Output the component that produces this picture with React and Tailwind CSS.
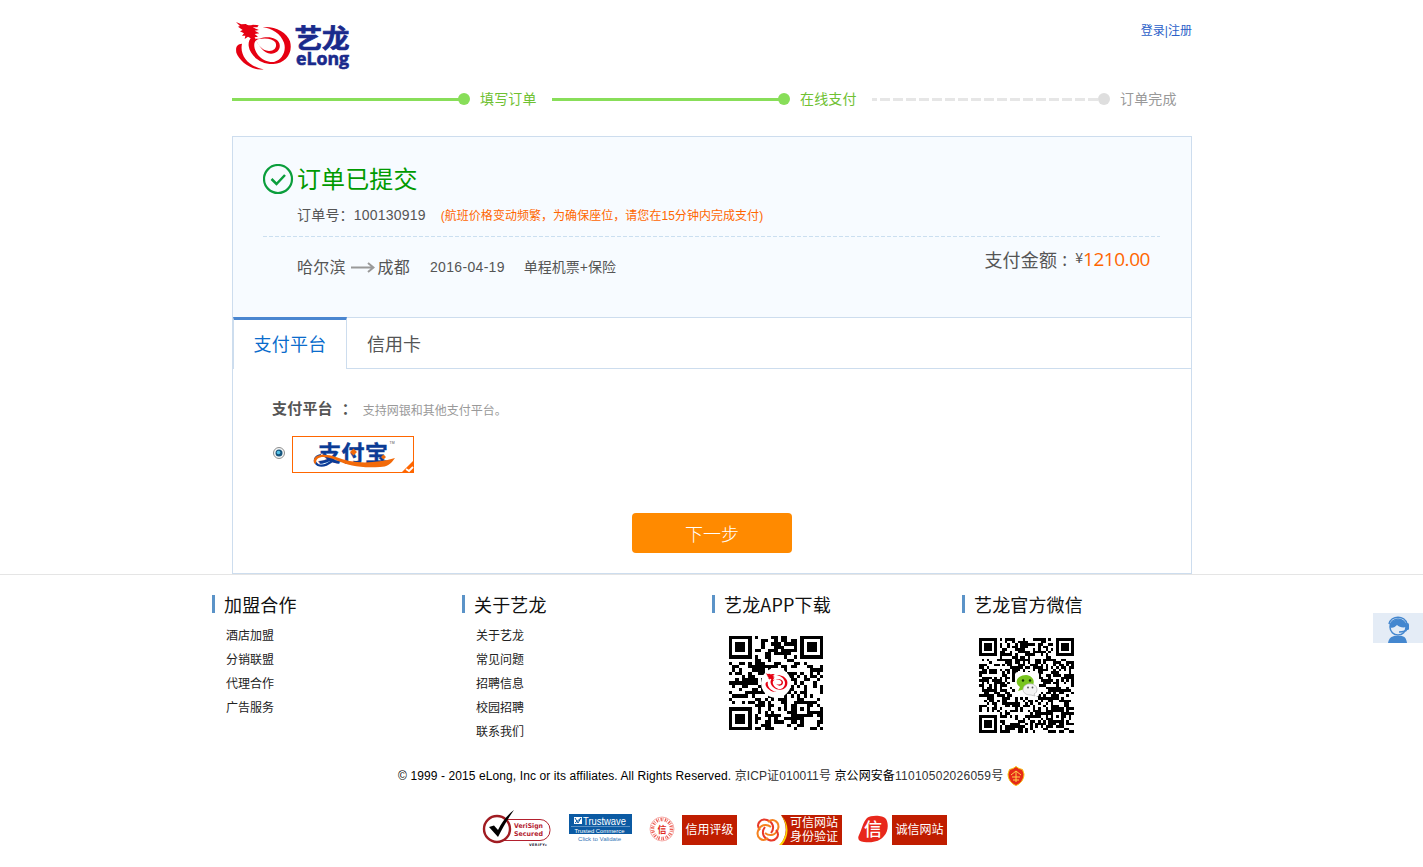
const CJK = "font-['Liberation_Sans','Noto_Sans_CJK_SC',sans-serif]";
const YH = "font-['Noto_Sans_CJK_SC',sans-serif]";
const cjkSvg = "'Noto Sans CJK SC',sans-serif";

function DragonMark() {
  return (
    <g fill="#e60012" transform="scale(.3333) translate(-42 -36)">
      <path d="M42 36L58 43L72 42C80 48 84 46 93 44L110 46L106 52L92 52L111 60L98 62L112 70L98 72L108 80L98 82C106 102 120 124 142 123C160 122 166 108 160 97C152 86 130 82 108 88C92 94 94 116 108 135C120 150 140 158 156 156C180 150 194 124 186 98C176 70 150 56 122 51C160 48 194 66 204 94C214 130 190 160 154 162C118 164 84 138 80 108C79 96 82 90 86 85L78 80L68 87L70 77L60 77L66 70L54 64L62 60L48 50L54 48ZM112 86C140 76 166 84 172 100C178 118 164 132 146 131C126 129 110 108 100 86Z" />
      <path d="M60 101C52 136 80 170 125 178C92 184 52 154 43 128C40 110 46 102 60 101Z" />
    </g>
  );
}

function Logo() {
  return (
    <svg width="118" height="70" viewBox="0 -11 118 70" className="ml-1 mt-[10px]" aria-label="eLong">
      <g transform="translate(0 1)"><DragonMark /></g>
      <g fill="#1a2a8c">
        <text x="58.500" y="26.500" fontSize="26" fontWeight="700" textLength="55" lengthAdjust="spacingAndGlyphs" fontFamily={cjkSvg} stroke="#1a2a8c" strokeWidth=".7">艺龙</text>
        <text x="60" y="43.500" fontSize="17.500" fontWeight="700" textLength="53" lengthAdjust="spacingAndGlyphs" fontFamily="'Open Sans',sans-serif" stroke="#1a2a8c" strokeWidth=".6">eLong</text>
      </g>
    </svg>
  );
}

function Step({ label, state, width }) {
  const done = state === "done";
  return (
    <li className={`flex items-center ${width}`}>
      <svg width="238" height="12" viewBox="0 0 238 12" className="shrink-0">
        <path d="M0 6.5H232" stroke={done ? "#88de59" : "#e6e6e6"} strokeWidth="3" strokeDasharray={done ? undefined : "10 3"} strokeDashoffset={done ? 0 : 5} />
        <circle cx="232" cy="6" r="6" fill={done ? "#88de59" : "#dedede"} />
      </svg>
      <span className={`mb-[3px] ml-[10px] text-sm leading-5 tracking-[0.15px] ${YH} ${done ? "text-[#6fc132]" : "text-[#999]"}`}>{label}</span>
    </li>
  );
}

function finder(r, c, n) {
  for (const [a, b] of [[0, 0], [0, n - 7], [n - 7, 0]]) {
    const y = r - a, x = c - b;
    if (y >= -1 && y <= 7 && x >= -1 && x <= 7) {
      if (y < 0 || y > 6 || x < 0 || x > 6) return false;
      return y === 0 || y === 6 || x === 0 || x === 6 || (y > 1 && y < 5 && x > 1 && x < 5);
    }
  }
  return null;
}

function qrPath(n, seed) {
  let s = seed, d = "";
  for (let r = 0; r < n; r++) {
    for (let c = 0; c < n; c++) {
      s = (Math.imul(s, 1103515245) + 12345) & 0x7fffffff;
      let on = ((s >> 16) & 1) === 1;
      const ay = Math.abs(r - (n - 7)), ax = Math.abs(c - (n - 7));
      if (ax < 3 && ay < 3) on = Math.max(ax, ay) !== 1;
      const f = finder(r, c, n);
      if (f !== null) on = f;
      if (on) d += `M${c} ${r}h1v1h-1z`;
    }
  }
  return d;
}

function QrCode({ modules, seed, size, children, className }) {
  return (
    <svg width={size} height={size} viewBox={`0 0 ${size} ${size}`} className={className}>
      <path d={qrPath(modules, seed)} transform={`scale(${size / modules})`} fill="#000" shapeRendering="crispEdges" />
      {children}
    </svg>
  );
}

function FooterColumn({ title, children }) {
  return (
    <section className="w-[250px]">
      <h3 className={`flex h-[18px] items-center border-l-[3px] border-[#5b93c8] pb-px pl-[9px] text-lg tracking-[0.15px] text-[#111] ${YH}`}>{title}</h3>
      {children}
    </section>
  );
}

function Links({ items }) {
  return (
    <ul className="ml-[14px] mt-[11px] text-xs leading-6 text-[#222]">
      {items.map((t) => <li key={t}><a href="#">{t}</a></li>)}
    </ul>
  );
}

function VeriSign() {
  return (
    <svg width="70" height="40" viewBox="0 0 70 40">
      <rect x="12" y="10.500" width="56" height="21" rx="10" fill="#fff" stroke="#b3202e" />
      <circle cx="15" cy="20" r="13" fill="#fff" stroke="#a01c22" strokeWidth="2.400" />
      <path d="M7 18L12 16.500L16 21C20 13 25 6 32 1C27 8 21 18 16 28Z" fill="#000" />
      <g fontFamily="'DejaVu Sans',sans-serif" fontWeight="700" fontSize="6.500" fill="#b3202e">
        <text x="32" y="19" textLength="29" lengthAdjust="spacingAndGlyphs">VeriSign</text>
        <text x="32" y="26.500" textLength="29" lengthAdjust="spacingAndGlyphs">Secured</text>
        <text x="47" y="36.500" fontSize="3.500" fill="#223" textLength="18">VERIFY▸</text>
      </g>
    </svg>
  );
}

function Trustwave() {
  return (
    <svg width="63" height="29" viewBox="0 0 63 29">
      <rect width="63" height="20" fill="#0b5aa3" />
      <path d="M5 3h8v7H5z" fill="#fff" />
      <path d="M6 4l3 5 3-5M6 9l6-5" stroke="#0b5aa3" fill="none" />
      <path d="M2 12.500H61" stroke="#7fa9d3" strokeWidth=".7" />
      <g fontFamily="'Liberation Sans',sans-serif" fill="#fff">
        <text x="14" y="10.500" fontSize="10" textLength="43" lengthAdjust="spacingAndGlyphs">Trustwave</text>
        <text x="5.500" y="18.500" fontSize="6" textLength="50" lengthAdjust="spacingAndGlyphs">Trusted Commerce</text>
        <text x="9" y="27" fontSize="6" textLength="43" lengthAdjust="spacingAndGlyphs" fill="#3576b5">Click to Validate</text>
      </g>
    </svg>
  );
}

function CreditSeal() {
  return (
    <svg width="26" height="26" viewBox="0 0 26 26">
      <circle cx="13" cy="13" r="12" fill="none" stroke="#f4a09a" strokeWidth=".8" />
      <circle cx="13" cy="13" r="9.500" fill="none" stroke="#e73428" strokeWidth="3.500" strokeDasharray="1.300 .8 .7 1.500" opacity=".8" />
      <circle cx="13" cy="13" r="6.500" fill="#fff" />
      <text x="8.500" y="16.500" fontSize="9" fontWeight="700" fill="#e02a20" fontFamily={cjkSvg}>信</text>
    </svg>
  );
}

function KnotSeal() {
  return (
    <svg width="32" height="30" viewBox="0 0 32 30">
      <path d="M25 0H32V30H24C32 20 31 9 25 0Z" fill="#c01d00" />
      <path d="M25 0C32 9 32 22 23 30L26 30C34 20 33 8 25 0Z" fill="#ffd400" />
      {[0, 90, 180, 270].map((a) => (
        <path key={a} transform={`rotate(${a} 12 15)`} d="M4 15C-1 9 5 3 11 5C17 7 19 13 15 18" fill="none" stroke={a % 180 ? "#f58220" : "#e83a2a"} strokeWidth="2" />
      ))}
    </svg>
  );
}

function HonestSeal() {
  return (
    <svg width="30" height="28" viewBox="0 0 30 28">
      <path d="M9 3C13 0 25 0 28 4C31 9 30 17 26 21C22 26 16 28 6 27C1 27-1 24 1 20C4 14 5 7 9 3Z" fill="#e8281c" />
      <text x="6" y="20.500" fontSize="18" fontWeight="500" fill="#fff" fontFamily={cjkSvg}>信</text>
    </svg>
  );
}

function SealLabel({ children, className }) {
  return <span className={`flex items-center justify-center bg-[#c01d00] pt-px text-xs text-white ${className}`}>{children}</span>;
}

export default function App() {
  return (
    <div className={`relative h-[867px] overflow-hidden bg-white text-[#555] ${CJK}`}>
      <div className="mx-auto w-[960px] relative left-[0.5px]">
        <header className="flex h-[86px] items-start justify-between">
          <Logo />
          <nav className="mt-[22px] flex text-xs leading-[18px] text-[#2a5fc9]"><a href="#">登录</a><span>|</span><a href="#">注册</a></nav>
        </header>
        <ol className="flex h-[50px] pt-[2px]">
          <div className="flex h-[22px]">
            <Step label="填写订单" state="done" width="w-[320px]" />
            <Step label="在线支付" state="done" width="w-[320px]" />
            <Step label="订单完成" state="todo" width="w-[320px]" />
          </div>
        </ol>

        <main className="h-[438px] border border-[#cdddee] bg-white">
          <section className="h-[180px] bg-[#f7fbff] px-[30px] pt-[27px]">
            <h1 className={`flex h-[31px] items-center text-2xl text-[#009a00] ${YH}`}>
              <svg width="31" height="31" viewBox="0 0 31 31" fill="none" stroke="#0b9e3c" className="mr-[3px] shrink-0">
                <circle cx="15" cy="15" r="14" strokeWidth="2.200" />
                <path d="M8.500 15L13.500 20L22 11" strokeWidth="2.500" />
              </svg>
              <span className="mb-[3px] tracking-[0.1px]">订单已提交</span>
            </h1>
            <p className="ml-[34px] mt-[10px] flex h-5 items-center text-sm tracking-[0.2px]">
              订单号：100130919<span className="relative top-px ml-[15px] text-xs tracking-[0.04px] text-[#ff6600]">(航班价格变动频繁，为确保座位，请您在15分钟内完成支付)</span>
            </p>
            <svg width="897" height="1" className="mt-[11px] block"><path d="M0 .5H897" stroke="#cbdff0" strokeDasharray="4 2" /></svg>
            <div className="ml-[34px] mr-[11px] flex justify-between">
              <p className="mt-[18px] flex h-6 items-center text-sm">
                <span className={`mb-[3px] text-base tracking-[0.2px] ${YH}`}>哈尔滨</span>
                <svg width="24" height="12" viewBox="0 0 24 12" className="ml-[5px] mr-[3px]" fill="none" stroke="#999" strokeWidth="2"><path d="M0 6.500H22M17 2L22.500 6.500L17 11" /></svg>
                <span className={`mb-[3px] text-base tracking-[0.2px] ${YH}`}>成都</span>
                <span className="ml-5 tracking-[0.32px]">2016-04-19</span>
                <span className="ml-[19px]">单程机票+保险</span>
              </p>
              <p className={`mt-2 flex h-7 items-center text-lg ${YH}`}>
                <span className="mb-px tracking-[0.2px]">支付金额</span><span className="w-[18px] pl-[5px] font-['Noto_Sans',sans-serif]">:</span><span className="relative -top-[2px] text-sm">¥</span>
                <span className="relative top-px font-['Open_Sans','Noto_Sans_CJK_SC',sans-serif] text-[19px] tracking-[-0.45px] text-[#ff6600]">1210.00</span>
              </p>
            </div>
          </section>
          <div className={`flex h-[52px] text-lg ${YH}`}>
            <button className="w-[114px] border-l border-r border-t-[3px] border-x-[#cdddee] border-t-[#4a86d0] pb-1 tracking-[0.2px] text-[#0a6ccc]">支付平台</button>
            <div className="flex-1 border-b border-t border-[#cdddee] pl-5"><button className="h-[50px] text-[#555]">信用卡</button></div>
          </div>
          <section className="px-[39px] pt-7">
            <div className="flex h-6 items-center">
              <strong className="text-[15px] tracking-[0.2px]">支付平台</strong><strong className="ml-[9px] w-4 text-[15px]">：</strong>
              <span className="ml-[5px] mt-[3px] text-xs text-[#999]">支持网银和其他支付平台。</span>
            </div>
            <div className="mt-[15px] flex h-[37px] items-center">
              <svg width="14" height="14" viewBox="0 0 14 14" className="mb-[3px] mr-[6px]">
                <circle cx="7" cy="7" r="5.500" fill="#f6f6f6" stroke="#8e8f8f" /><circle cx="7" cy="7" r="3.500" fill="#17557d" /><circle cx="6.500" cy="6.500" r="1.800" fill="#55c3e8" />
              </svg>
              <svg width="122" height="37" viewBox="0 0 122 37">
                <rect x=".5" y=".5" width="121" height="36" fill="#fff" stroke="#ff6600" />
                <path d="M109 37L122 24V37Z" fill="#ff6600" /><path d="M114 33L117 35L121 31" stroke="#fff" strokeWidth="1.800" fill="none" />
                <text x="26" y="24.500" fontSize="22" fontWeight="700" fill="#0b3b95" stroke="#0b3b95" strokeWidth=".3" textLength="70" lengthAdjust="spacingAndGlyphs" fontFamily={cjkSvg}>支付宝</text>
                <path d="M58 16l3.500-3.500 3.500 3.500-3.500 3.500zM89 21l2.500-2.500 2.500 2.500-2.500 2.500z" fill="#f26a0a" />
                <path d="M42 23C38 28 31 31 26 29C21 26 22 20 29 19" fill="none" stroke="#0b3b95" strokeWidth="2.200" />
                <path d="M22 27C20 18 32 17 44 21C60 28 82 28 103 22C99 28 95 31 88 31C68 32 57 30 44 24C32 19 23 20 24 28Z" fill="#f26a0a" />
                <text x="97.500" y="7.500" fontSize="3.500" fill="#555" fontFamily="'Liberation Sans',sans-serif">TM</text>
              </svg>
            </div>
            <button className={`mx-auto mt-10 flex h-10 w-40 items-center justify-center rounded-sm bg-[#ff8a00] text-lg font-light text-white ${YH}`}>下一步</button>
          </section>
        </main>
      </div>

      <footer className="border-t border-[#e5e5e5] text-black">
        <div className="ml-[212px] flex h-[180px] pt-5">
          <FooterColumn title="加盟合作"><Links items={["酒店加盟", "分销联盟", "代理合作", "广告服务"]} /></FooterColumn>
          <FooterColumn title="关于艺龙"><Links items={["关于艺龙", "常见问题", "招聘信息", "校园招聘", "联系我们"]} /></FooterColumn>
          <FooterColumn title="艺龙APP下载">
            <QrCode modules={29} seed={77} size={94} className="ml-[17px] mt-[23px]">
              <circle cx="47" cy="47" r="15" fill="#fff" /><g transform="translate(36.500 37) scale(.4)"><DragonMark /></g>
            </QrCode>
          </FooterColumn>
          <FooterColumn title="艺龙官方微信">
            <QrCode modules={37} seed={191} size={95} className="ml-[17px] mt-[25px]">
              <rect x="36" y="34" width="24" height="25" rx="3" fill="#fff" />
              <path d="M39 53l2-4C34 44 39 37 47 37C57 38 58 50 46 51Z" fill="#79c51f" />
              <circle cx="44" cy="42.500" r="1.200" fill="#143b00" /><circle cx="51" cy="42.500" r="1.200" fill="#143b00" />
              <path d="M44 51C45 44 57 44 58 51C58 54 57 55 55 56L56 58L52 57C47 57 44 55 44 51Z" fill="#f5f5f5" stroke="#aaa" strokeWidth=".6" />
              <circle cx="49" cy="49.500" r=".9" fill="#555" /><circle cx="53.500" cy="49.500" r=".9" fill="#555" />
            </QrCode>
          </FooterColumn>
        </div>
        <div className="flex h-[42px] items-center justify-center text-xs">
          <p className="w-[606px] whitespace-nowrap tracking-[0.1px]">© 1999 - 2015 eLong, Inc or its affiliates. All Rights Reserved. <span className="text-[#333]">京ICP证010011号</span> 京公网安备<span className="tracking-[0.27px] text-[#333]">11010502026059号</span></p>
          <svg width="18" height="20" viewBox="0 0 18 20" className="ml-[3px]">
            <path d="M9 .5L12 2.500L15.500 3.500L17 8C17 14 13 18 9 19.500C5 18 1 14 1 8L2.500 3.500L6 2.500Z" fill="#e52a18" stroke="#f8c513" />
            <path d="M4 9L9 5L14 9M5 11H13M9 6V16M6 14H12" stroke="#ffd34a" fill="none" />
          </svg>
        </div>
        <div className="ml-[482px] mt-3 flex items-center">
          <VeriSign />
          <div className="ml-[17px] mt-[-1px]"><Trustwave /></div>
          <div className="ml-[17px]"><CreditSeal /></div><SealLabel className="ml-[7px] mt-px h-[30px] w-[55px]">信用评级</SealLabel>
          <div className="ml-[19px] mt-px"><KnotSeal /></div><SealLabel className="mt-px h-[30px] w-[54px] pr-1 text-right leading-[14px]">可信网站 身份验证</SealLabel>
          <div className="ml-4"><HonestSeal /></div><SealLabel className="ml-1 mt-px h-[30px] w-[55px]">诚信网站</SealLabel>
        </div>
      </footer>

      <button className="absolute left-[1373px] top-[613px] flex h-[30px] w-[50px] justify-center bg-[#e4ecf6]" aria-label="在线客服">
        <svg width="24" height="30" viewBox="0 0 24 30" className="mr-px">
          <path d="M2 30C3 25 5 24 8 23H16C19 24 20 25 21 30Z" fill="#4487cf" />
          <circle cx="12" cy="14" r="8" fill="#e4ecf6" stroke="#4487cf" strokeWidth="1.500" />
          <path d="M4 14C6 16 9 14 11 12C13 14 17 15 20 14C21 4 4 4 4 14Z" fill="#4487cf" />
          <path d="M3 11C5 2 19 2 21 11" fill="none" stroke="#4487cf" strokeWidth="1.500" />
          <rect x="20" y="10" width="3" height="7" rx="1.500" fill="#4487cf" /><path d="M21 16C20 19 17 19 13 19" fill="none" stroke="#4487cf" strokeWidth="1.500" />
        </svg>
      </button>
    </div>
  );
}
